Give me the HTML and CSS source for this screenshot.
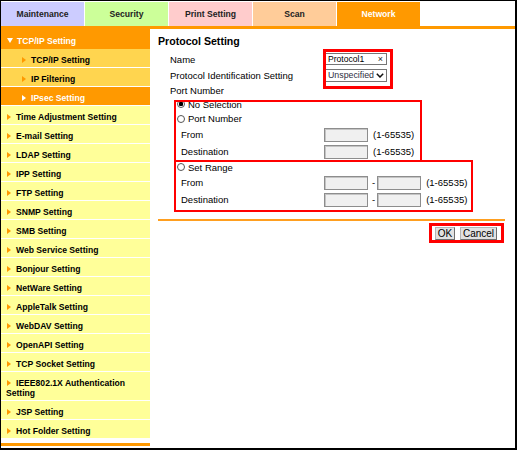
FILE: index.html
```html
<!DOCTYPE html>
<html>
<head>
    <meta charset="UTF-8">
    <title>Protocol Setting</title>
    <link rel="stylesheet" href="styles.css">
</head>
<body>
<div class="frame">

    <div class="tabs">
        <div class="tab maint">Maintenance</div>
        <div class="tab security">Security</div>
        <div class="tab print">Print Setting</div>
        <div class="tab scan">Scan</div>
        <div class="tab network">Network</div>
    </div>
    <div class="tabline"></div>

    <div class="main">
        <div class="side">
            <ul class="menu">
                <li class="head"><span class="down"></span>TCP/IP Setting</li>
                <li class="sub"><span class="arrow"></span>TCP/IP Setting</li>
                <li class="sub"><span class="arrow"></span>IP Filtering</li>
                <li class="sub current"><span class="arrow"></span>IPsec Setting</li>
                <li><span class="arrow"></span>Time Adjustment Setting</li>
                <li><span class="arrow"></span>E-mail Setting</li>
                <li><span class="arrow"></span>LDAP Setting</li>
                <li><span class="arrow"></span>IPP Setting</li>
                <li><span class="arrow"></span>FTP Setting</li>
                <li><span class="arrow"></span>SNMP Setting</li>
                <li><span class="arrow"></span>SMB Setting</li>
                <li><span class="arrow"></span>Web Service Setting</li>
                <li><span class="arrow"></span>Bonjour Setting</li>
                <li><span class="arrow"></span>NetWare Setting</li>
                <li><span class="arrow"></span>AppleTalk Setting</li>
                <li><span class="arrow"></span>WebDAV Setting</li>
                <li><span class="arrow"></span>OpenAPI Setting</li>
                <li><span class="arrow"></span>TCP Socket Setting</li>
                <li><span class="arrow"></span>IEEE802.1X Authentication Setting</li>
                <li><span class="arrow"></span>JSP Setting</li>
                <li><span class="arrow"></span>Hot Folder Setting</li>
            </ul>
        </div>

        <div class="content">
            <h2>Protocol Setting</h2>

            <div class="row r16">
                <span class="label">Name</span>
                <span class="namebox">Protocol1<span class="clear">×</span></span>
            </div>
            <div class="row r16">
                <span class="label">Protocol Identification Setting</span>
                <span class="selectbox">Unspecified
                    <svg width="8" height="5" viewBox="0 0 8 5"><polyline points="0.8,0.8 4,4 7.2,0.8" fill="none" stroke="#111" stroke-width="1.5"/></svg>
                </span>
            </div>
            <div class="row r14">
                <span class="label">Port Number</span>
            </div>

            <div class="group">
                <label class="radio r14"><input type="radio" name="port" checked>No Selection</label>
                <label class="radio r15"><input type="radio" name="port">Port Number</label>
                <div class="field">
                    <span class="flabel">From</span>
                    <input class="port" type="text" disabled>
                    <span class="range">(1-65535)</span>
                </div>
                <div class="field">
                    <span class="flabel">Destination</span>
                    <input class="port" type="text" disabled>
                    <span class="range">(1-65535)</span>
                </div>

                <label class="radio r14"><input type="radio" name="port">Set Range</label>
                <div class="field">
                    <span class="flabel">From</span>
                    <input class="port" type="text" disabled>
                    <span class="dash">-</span>
                    <input class="port" type="text" disabled>
                    <span class="range">(1-65535)</span>
                </div>
                <div class="field">
                    <span class="flabel">Destination</span>
                    <input class="port" type="text" disabled>
                    <span class="dash">-</span>
                    <input class="port" type="text" disabled>
                    <span class="range">(1-65535)</span>
                </div>
            </div>

            <div class="actions">
                <button class="btn ok">OK</button>
                <button class="btn cancel">Cancel</button>
            </div>

            <!-- red annotation boxes -->
            <div class="mark mark-name"></div>
            <div class="mark mark-port"></div>
            <div class="mark mark-range"></div>
            <div class="mark mark-buttons"></div>
        </div>
    </div>

</div>
</body>
</html>
```

FILE: styles.css
```css
body {
    margin: 0;
    background: #fff;
    font-family: "Liberation Sans", Arial, sans-serif;
    color: #000;
}
.frame {
    position: relative;
    width: 517px;
    height: 450px;
    box-sizing: border-box;
    border: 1px solid #000;
    border-right-width: 2px;
    border-bottom-width: 2px;
    overflow: hidden;
}

/* top tabs */
.tabs {
    display: flex;
    margin-top: 1px;
    height: 24px;
}
.tab {
    width: 83px;
    border-right: 1px solid #fff;
    display: flex;
    align-items: center;
    justify-content: center;
    font-size: 8.6px;
    font-weight: bold;
    color: #222;
}
.maint { background: #ccccff; }
.security { background: #ccff99; }
.print { background: #ffcccc; }
.scan { background: #ffcc99; }
.network { background: #ff9900; color: #fff; }
.tabline {
    height: 3px;
    background: #ff9900;
}

.main {
    display: flex;
}

/* left menu */
.side {
    width: 149px;
    flex: none;
    align-self: flex-start;
    border-bottom: 3px solid #ff9900;
}
.menu {
    list-style: none;
    margin: 0 0 4px;
    padding: 0;
    font-size: 8.6px;
    font-weight: bold;
    line-height: 10px;
}
.menu li {
    padding: 6px 4px 2px 5px;
    background: #ffff99;
    border-bottom: 1px solid #fff;
}
.menu li.head {
    padding-top: 7px;
    padding-bottom: 3px;
    background: #ff9900;
    color: #fff;
    border-bottom: none;
}
.menu li.sub {
    padding-left: 20px;
    background: #ffd54f;
}
.menu li.current {
    background: #ff9900;
    color: #fff;
}
.arrow {
    display: inline-block;
    width: 0;
    height: 0;
    margin: 0 5px 0 1px;
    border-left: 4px solid #ff9900;
    border-top: 3px solid transparent;
    border-bottom: 3px solid transparent;
    vertical-align: 0;
}
.current .arrow {
    border-left-color: #fff;
}
.down {
    display: inline-block;
    width: 0;
    height: 0;
    margin: 0 4px 0 1px;
    border-top: 5px solid #fff;
    border-left: 3px solid transparent;
    border-right: 3px solid transparent;
    vertical-align: 1px;
}

/* content */
.content {
    position: relative;
    flex: 1;
    padding: 6px 10px 0 8px;
    font-size: 9.5px;
}
.content h2 {
    margin: 0 0 3px;
    font-size: 10.6px;
    line-height: 13px;
}
.row {
    display: flex;
    align-items: center;
    margin-left: 12px;
}
.r14 { height: 14px; }
.r15 { height: 15px; }
.r16 { height: 16px; }
.label {
    width: 155px;
    flex: none;
}
.namebox, .selectbox {
    display: flex;
    align-items: center;
    justify-content: space-between;
    width: 62px;
    height: 12px;
    box-sizing: border-box;
    padding: 0 3px 0 2px;
    border: 1px solid #767676;
    background: #fff;
    font-size: 8.6px;
    line-height: 10px;
}
.selectbox {
    height: 13px;
    padding-right: 2px;
    color: #2e2e3e;
    font-size: 8.8px;
}
.clear {
    font-size: 9px;
    color: #222;
}

.group {
    margin-left: 16px;
}
.radio {
    display: flex;
    align-items: center;
    padding-left: 3px;
}
.radio input {
    appearance: none;
    -webkit-appearance: none;
    width: 8px;
    height: 8px;
    margin: 0 3px 0 0;
    box-sizing: border-box;
    border: 1px solid #555;
    border-radius: 50%;
    background: #fff;
}
.radio input:checked {
    background: radial-gradient(circle, #000 0 2px, #fff 2.5px);
}
.field {
    display: flex;
    align-items: center;
    height: 17px;
    padding-left: 7px;
}
.flabel {
    width: 143px;
    flex: none;
}
.port {
    width: 44px;
    height: 14px;
    margin: 0;
    padding: 0;
    box-sizing: border-box;
    border: 1px solid #8d8d8d;
    box-shadow: inset 1px 1px 0 #c4c4c4;
    background: #f0f0f0;
}
.dash {
    margin: 0 2px 0 4px;
}
.range {
    margin-left: 5px;
}

.actions {
    margin-top: 11px;
    border-top: 2px solid #ff9f1f;
    padding: 6px 8px 0 0;
    display: flex;
    justify-content: flex-end;
    gap: 5px;
}
.btn {
    height: 13px;
    padding: 0;
    font-family: "Liberation Sans", Arial, sans-serif;
    font-size: 10px;
    line-height: 11px;
    background: #e1e1e1;
    border: 1px solid #b4b4b4;
    border-right-color: #6e6e6e;
    border-bottom-color: #6e6e6e;
    color: #000;
}
.ok { width: 20px; }
.cancel { width: 37px; }

/* red annotation frames drawn over the form */
.mark {
    position: absolute;
    box-sizing: border-box;
    border: 2px solid #ff0000;
}
.mark-name { left: 173px; top: 20px; width: 70px; height: 40px; border-width: 3px; }
.mark-port { left: 24px; top: 71px; width: 248px; height: 62px; }
.mark-range { left: 24px; top: 131px; width: 299px; height: 52px; }
.mark-buttons { left: 279px; top: 194px; width: 75px; height: 20px; border-width: 3px; }
```
